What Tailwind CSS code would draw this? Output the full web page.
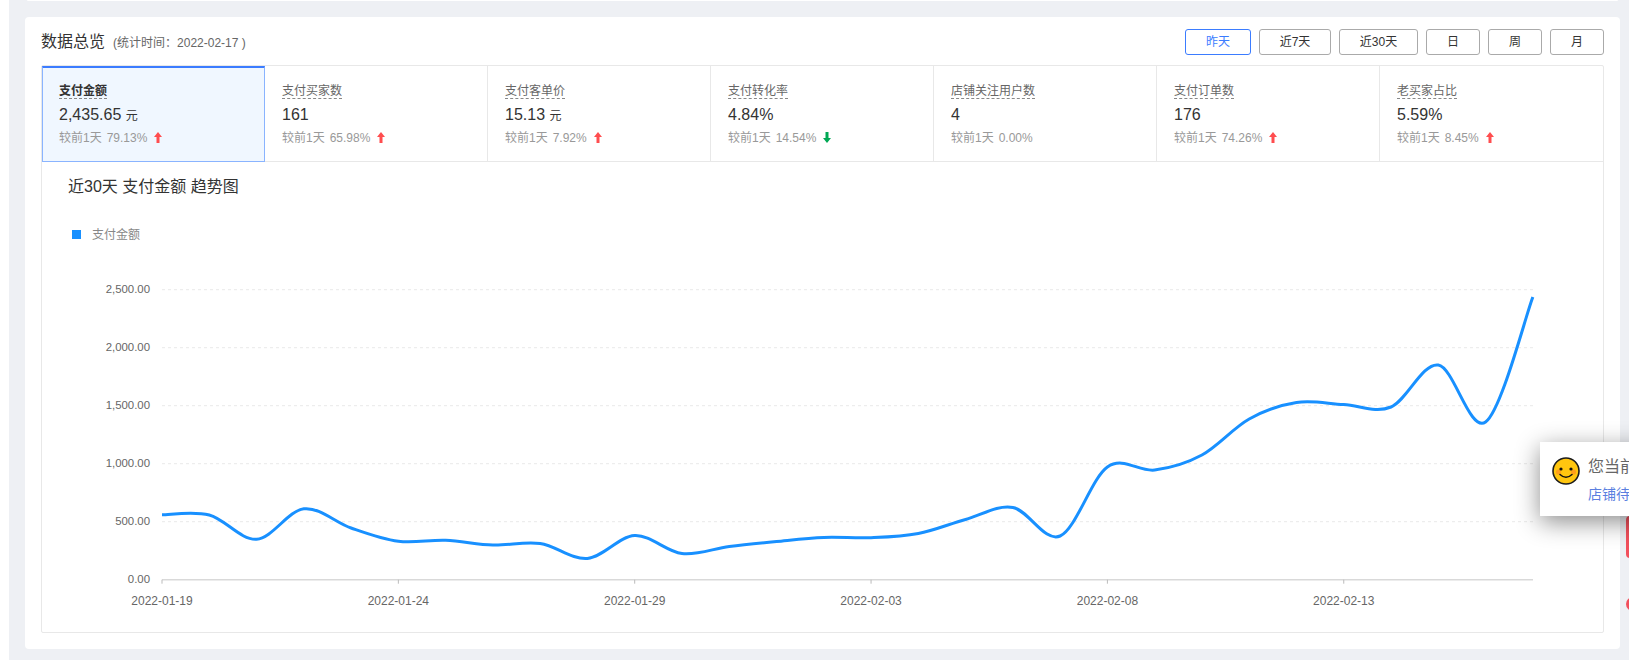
<!DOCTYPE html>
<html lang="zh-CN">
<head>
  <meta charset="UTF-8">
  <title>数据总览</title>
  <script src="https://cdn.jsdelivr.net/npm/@tailwindcss/browser@4"></script>
</head>
<body class="bg-white h-[660px] overflow-hidden relative pl-[9px] font-[family-name:'Liberation_Sans','Noto_Sans_CJK_SC',sans-serif]">

  <div class="bg-[#eef0f4] h-[660px] pl-[16px] pr-[9px]">
    <div class="bg-white h-px mx-[2px] rounded-b"></div>

    <div class="bg-white h-[632px] mt-[16px] rounded px-[16px] pt-[12px]">
      <!-- header -->
      <div class="flex justify-between items-center h-[26px] mb-[10px]">
        <div class="flex items-center">
          <span class="text-base text-[#333]">数据总览</span>
          <span class="text-xs text-[#666] ml-[8px]">(统计时间<span class="font-[family-name:'Noto_Sans_CJK_TC',sans-serif]">：</span>2022-02-17 )</span>
        </div>
        <div class="flex gap-[8px] text-xs text-[#333]">
          <button class="w-[66px] h-[26px] rounded-[3px] border border-[#3b7cff] text-[#3b7cff]">昨天</button>
          <button class="w-[72px] h-[26px] rounded-[3px] border border-[#aaa]">近7天</button>
          <button class="w-[79px] h-[26px] rounded-[3px] border border-[#aaa]">近30天</button>
          <button class="w-[54px] h-[26px] rounded-[3px] border border-[#aaa]">日</button>
          <button class="w-[54px] h-[26px] rounded-[3px] border border-[#aaa]">周</button>
          <button class="w-[54px] h-[26px] rounded-[3px] border border-[#aaa]">月</button>
        </div>
      </div>

      <div class="border border-[#e8e8e8] rounded-[2px] h-[568px]">
        <div id="tabs" class="grid grid-cols-7 h-[96px] border-b border-[#e8e8e8]"></div>

        <div class="pl-[26px] pt-[15px] h-[43px] text-base leading-[20px] text-[#333]">近30天 支付金额 趋势图</div>
        <svg id="chart" class="block" width="1561" height="426" viewBox="42 205 1561 426"></svg>
      </div>
    </div>
  </div>

  <!-- red widgets peeking in from the right edge -->
  <div class="absolute left-[1626px] top-[516px] w-[10px] h-[42px] rounded-l bg-[#f2505d]"></div>
  <div class="absolute left-[1626px] top-[597px] w-[14px] h-[14px] rounded-full bg-[#f2505d]"></div>

  <!-- notice popup, runs off the window -->
  <div class="absolute left-[1540px] top-[442px] w-[300px] h-[74px] bg-white shadow-[0_6px_24px_rgba(0,0,0,0.45)]">
    <svg class="absolute left-[12px] top-[15px]" width="28" height="28" viewBox="0 0 28 28">
      <circle cx="14" cy="14" r="13" fill="#ffc60f" stroke="#1c1c1c" stroke-width="1.6"/>
      <circle cx="6.5" cy="15" r="2.6" fill="#ff9f1c"/>
      <circle cx="21.5" cy="15" r="2.6" fill="#ff9f1c"/>
      <circle cx="9" cy="12" r="1.6" fill="#111"/>
      <circle cx="19" cy="12" r="1.6" fill="#111"/>
      <path d="M8 17.5 Q14 23 20 17.5" fill="none" stroke="#111" stroke-width="1.5" stroke-linecap="round"/>
    </svg>
    <div class="absolute left-[48px] top-[14px] text-base leading-[22px] text-[#666] whitespace-nowrap">您当前</div>
    <div class="absolute left-[48px] top-[42px] text-sm leading-[20px] text-[#5b7fe0] whitespace-nowrap">店铺待</div>
  </div>

<script>
  const upArrow = `<svg class="inline-block ml-[7px] align-[-1px]" width="8" height="11" viewBox="0 0 8 11"><path d="M4 0 L8 5 H5.5 V11 H2.5 V5 H0 Z" fill="#ff4d4f"/></svg>`;
  const downArrow = `<svg class="inline-block ml-[7px] align-[-1px]" width="8" height="11" viewBox="0 0 8 11"><path d="M4 11 L8 6 H5.5 V0 H2.5 V6 H0 Z" fill="#00a854"/></svg>`;

  const tabs = [
    { label: '支付金额', value: '2,435.65', unit: '元', delta: '79.13%', arrow: upArrow, active: true },
    { label: '支付买家数', value: '161', delta: '65.98%', arrow: upArrow },
    { label: '支付客单价', value: '15.13', unit: '元', delta: '7.92%', arrow: upArrow },
    { label: '支付转化率', value: '4.84%', delta: '14.54%', arrow: downArrow },
    { label: '店铺关注用户数', value: '4', delta: '0.00%', arrow: '' },
    { label: '支付订单数', value: '176', delta: '74.26%', arrow: upArrow },
    { label: '老买家占比', value: '5.59%', delta: '8.45%', arrow: upArrow, last: true }
  ];

  document.getElementById('tabs').innerHTML = tabs.map(tab => {
    const box = tab.active
      ? 'bg-[#f0f7ff] border border-[#8ab4ff] border-t-2 border-t-[#3b7cff] h-[96px] pl-[16px] pt-[15px]'
      : tab.last ? 'pl-[17px] pt-[17px]' : 'border-r border-[#e8e8e8] pl-[17px] pt-[17px]';
    const labelColor = tab.active ? 'font-bold text-[#333]' : 'text-[#666]';
    return `
      <div class="${box}">
        <div class="w-fit pt-[2px] text-xs leading-[13px] border-b border-dashed border-[#888] ${labelColor}">${tab.label}</div>
        <div class="mt-[6px] text-base leading-[20px] text-[#333]">${tab.value}${tab.unit ? ` <span class="text-xs">${tab.unit}</span>` : ''}</div>
        <div class="mt-[5px] text-xs leading-[16px] text-[#999]">较前1天<span class="ml-[5px]">${tab.delta}</span>${tab.arrow}</div>
      </div>`;
  }).join('');

  // chart, in page pixels: one day is 47.27px, 500 is 58px
  const x0 = 162, dayW = 47.27, yAxis = 579.7;
  const ys = [514.7, 515, 539.3, 508.8, 528, 541.3, 540.3, 545, 543.5, 558.4,
              535.5, 553.5, 546.5, 541.5, 537.5, 537.7, 533.5, 519.5, 507.5, 536,
              467, 470, 455, 419, 402.5, 404.5, 407, 365, 422, 297];
  const pts = ys.map((y, i) => [x0 + i * dayW, y]);

  let d = `M${pts[0][0]} ${pts[0][1]}`;
  for (let i = 0; i < pts.length - 1; i++) {
    const p0 = pts[Math.max(i - 1, 0)], p1 = pts[i], p2 = pts[i + 1], p3 = pts[Math.min(i + 2, pts.length - 1)];
    const c1 = [p1[0] + (p2[0] - p0[0]) / 6, p1[1] + (p2[1] - p0[1]) / 6];
    const c2 = [p2[0] - (p3[0] - p1[0]) / 6, p2[1] - (p3[1] - p1[1]) / 6];
    d += ` C${c1[0]} ${c1[1]} ${c2[0]} ${c2[1]} ${p2[0]} ${p2[1]}`;
  }

  let svg = `<rect x="72" y="230" width="9" height="9" fill="#1890ff"/>
    <text x="92" y="239" font-size="12" fill="#888">支付金额</text>`;

  ['0.00', '500.00', '1,000.00', '1,500.00', '2,000.00', '2,500.00'].forEach((label, i) => {
    const y = yAxis - i * 58;
    svg += `<text x="150" y="${y + 3.3}" text-anchor="end" font-size="11.4" fill="#666">${label}</text>`;
    if (i > 0) svg += `<line x1="${x0}" x2="1533" y1="${y}" y2="${y}" stroke="#e9e9e9" stroke-width="1" stroke-dasharray="3 3"/>`;
  });

  svg += `<line x1="${x0}" x2="1533" y1="${yAxis}" y2="${yAxis}" stroke="#d9d9d9" stroke-width="1.4"/>`;
  ['2022-01-19', '2022-01-24', '2022-01-29', '2022-02-03', '2022-02-08', '2022-02-13'].forEach((label, i) => {
    const x = x0 + i * 5 * dayW;
    svg += `<line x1="${x}" x2="${x}" y1="${yAxis}" y2="${yAxis + 4}" stroke="#bbb"/>
      <text x="${x}" y="605" text-anchor="middle" font-size="12" fill="#666">${label}</text>`;
  });

  svg += `<path d="${d}" fill="none" stroke="#1890ff" stroke-width="3" stroke-linejoin="round"/>`;
  document.getElementById('chart').innerHTML = svg;
</script>

</body>
</html>
